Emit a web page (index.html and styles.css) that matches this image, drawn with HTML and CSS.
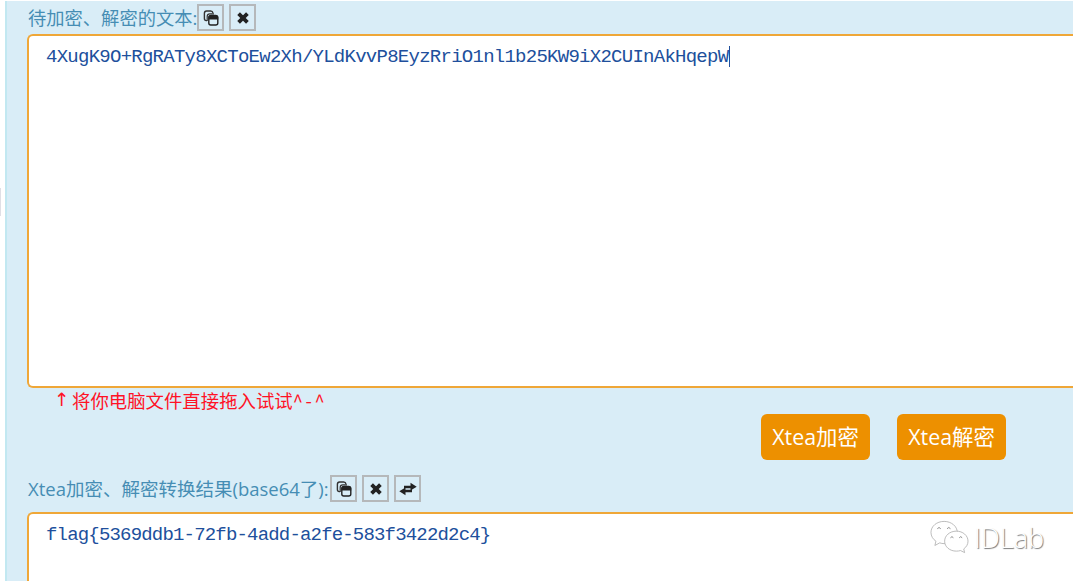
FILE: index.html
```html
<!DOCTYPE html>
<html lang="zh">
<head>
<meta charset="utf-8">
<title>Xtea</title>
<link rel="stylesheet" href="styles.css">
</head>
<body>
<svg class="symbols" aria-hidden="true">
  <symbol id="copy" viewBox="0 0 16 16">
    <path d="M4 10.6H3.2Q1.4 10.6 1.4 8.6V3.2Q1.4 1 3.6 1H7.6Q9.6 1 10 3" fill="none" stroke="#333" stroke-width="1.4"/>
    <path d="M4.2 11V6.4Q4.2 3.8 6.8 3.8H11" fill="none" stroke="#333" stroke-width="1.2"/>
    <rect x="5.8" y="5.6" width="9" height="9.4" rx="2" fill="none" stroke="#222" stroke-width="1.4"/>
    <path d="M5.4 9.4V7.4Q5.4 4.8 8 4.8H12.6Q15.2 4.8 15.2 7.4V9.4Z" fill="#222"/>
  </symbol>
  <symbol id="close" viewBox="0 0 16 16">
    <path d="M3.6 3.6L12.4 12.4M12.4 3.6L3.6 12.4" stroke="#222" stroke-width="3.8"/>
  </symbol>
  <symbol id="swap" viewBox="0 0 18 16">
    <path d="M5 4.8H11.5V1.7L17.7 5.7L11.5 9.4V7.3H5ZM13 8.7V11.2H6.5V14.3L.3 10.3L6.5 6.6V8.7Z" fill="#222"/>
  </symbol>
</svg>
<div class="edge"></div>
<main class="panel">
  <div class="heading first"><span class="label source">待加密、解密的文本:</span>
    <button class="tool"><svg><use href="#copy"/></svg></button>
    <button class="tool"><svg><use href="#close"/></svg></button>
  </div>
  <div class="box input"><span class="code">4XugK9O+RgRATy8XCToEw2Xh/YLdKvvP8EyzRriO1nl1b25KW9iX2CUInAkHqepW</span><i class="caret"></i></div>
  <div class="hint"><span class="arrow">↑</span><span>将你电脑文件直接拖入试试</span><span class="face">^-^</span></div>
  <div class="actions"><button class="action">Xtea加密</button><button class="action">Xtea解密</button></div>
  <div class="heading second"><span class="label result">Xtea加密、解密转换结果(base64了):</span>
    <button class="tool"><svg><use href="#copy"/></svg></button>
    <button class="tool"><svg><use href="#close"/></svg></button>
    <button class="tool"><svg class="wide"><use href="#swap"/></svg></button>
  </div>
  <div class="box output"><span class="code flag">flag{5369ddb1-72fb-4add-a2fe-583f3422d2c4}</span></div>
</main>
<div class="watermark">
  <svg viewBox="0 0 40 34">
    <g fill="#fff" stroke="#aaa" stroke-width=".8">
      <path d="M14.5 1C6.8 1 1 6 1 12.3C1 16 3 19.3 6.1 21.3L5 25.7L10 23Q12 23.8 14.5 23.8C22 23.8 28 18.7 28 12.4S22 1 14.5 1Z"/>
      <path d="M27 11C20.3 11 15 15.5 15 21.3S20.3 31.5 27 31.5Q29.3 31.5 31.3 30.9L35.5 33L34.6 29.2C37.3 27.3 39 24.5 39 21.3C39 15.5 33.7 11 27 11Z"/>
    </g>
    <path d="M7.5 8.5Q9.3 6 11 8.5M17.5 8.5Q19.3 6 21 8.5M21 17.8Q22.5 15.5 24 17.8M30 17.8Q31.5 15.5 33 17.8" fill="none" stroke="#888"/>
  </svg>
  <span>IDLab</span>
</div>
</body>
</html>
```
FILE: styles.css
```css
* { box-sizing: border-box; }
body {
  margin: 0;
  height: 583px;
  position: relative;
  overflow: hidden;
  background: #fff;
  font: 18.6px/24px "Open Sans", "Noto Sans CJK SC", sans-serif;
}
.symbols { position: absolute; width: 0; height: 0; }
.edge {
  position: absolute;
  left: 0;
  top: 188px;
  width: 1px;
  height: 28px;
  background: #dfdfe5;
}
.panel {
  display: flex;
  flex-direction: column;
  width: 1068px;
  height: 580px;
  margin: 1px 0 0 5px;
  padding-left: 21px;
  overflow: hidden;
  background: #d9edf7;
  border-left: 2px solid #c2e8f1;
}
.heading { display: flex; flex: none; align-items: center; gap: 5px; color: #468db4; }
.first { height: 33px; }
.second { height: 52px; padding-top: 5px; }
.label { flex: none; white-space: nowrap; margin-right: -5px; }
.source { width: 169px; font-size: 18.3px; }
.result { width: 302px; font-size: 18.5px; }
.tool {
  display: flex;
  flex: none;
  align-items: center;
  justify-content: center;
  width: 27px;
  height: 27px;
  padding: 0;
  background: transparent;
  border: 2px solid #b5b8ba;
}
.tool svg { width: 16px; height: 16px; }
.tool .wide { width: 18px; }
.box {
  display: flex;
  flex: none;
  align-items: flex-start;
  margin-left: -1px;
  background: #fff;
  border: 2px solid #efa738;
  border-right: 0;
  border-radius: 6px 0 0 6px;
}
.input { height: 354px; padding: 9px 0 0 17px; }
.output { height: 90px; border-bottom: 0; border-radius: 6px 0 0 0; padding: 9px 0 0 17px; }
.code {
  color: #204f9c;
  font: 19px/24px "Liberation Mono", monospace;
  letter-spacing: -0.74px;
}
.flag { letter-spacing: -0.82px; }
.caret { width: 1px; height: 21px; margin: 1px 0 0 1px; background: #204f9c; }
.hint {
  display: flex;
  flex: none;
  height: 26px;
  padding-left: 26px;
  color: #ff1226;
  font-family: "Noto Sans CJK SC", sans-serif;
  font-size: 18.4px;
}
.arrow { width: 18px; font-family: "DejaVu Sans", sans-serif; }
.face { letter-spacing: 2.6px; }
.actions { display: flex; flex: none; gap: 27px; height: 46px; padding-left: 733px; }
.action {
  width: 109px;
  height: 46px;
  padding: 0;
  border: 0;
  border-radius: 6px;
  color: #fff;
  background: #ed9000;
  font: 21.4px/46px "Open Sans", "Noto Sans CJK SC", sans-serif;
  white-space: nowrap;
}
.watermark {
  position: absolute;
  left: 930px;
  top: 520px;
  display: flex;
  gap: 5px;
  color: #fff;
  font: 300 27px/36px "Open Sans", sans-serif;
  text-shadow: 1px 1px 1px #777;
}
.watermark svg { width: 39px; height: 34px; }
```
